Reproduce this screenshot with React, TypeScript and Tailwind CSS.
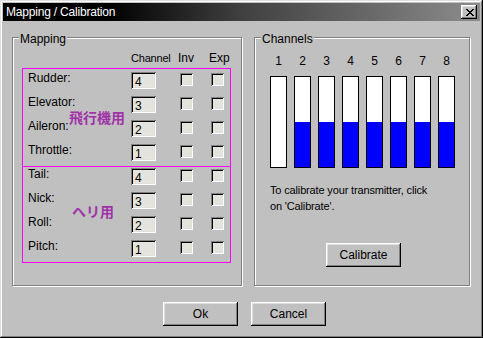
import type { ReactNode } from "react";

const raised = "shadow-[inset_-1px_-1px_0_#000,inset_1px_1px_0_#fff,inset_-2px_-2px_0_#808080,inset_2px_2px_0_#dfdfdf]";
const sunken = "shadow-[inset_1px_1px_0_#808080,inset_-1px_-1px_0_#fff,inset_2px_2px_0_#000,inset_-2px_-2px_0_#dfdfdf]";
const etched = "border border-[#808080] shadow-[inset_1px_1px_0_#fff,1px_1px_0_#fff]";

const planeRows = [
    { label: "Rudder:", ch: "4" },
    { label: "Elevator:", ch: "3" },
    { label: "Aileron:", ch: "2" },
    { label: "Throttle:", ch: "1" },
];
const heliRows = [
    { label: "Tail:", ch: "4" },
    { label: "Nick:", ch: "3" },
    { label: "Roll:", ch: "2" },
    { label: "Pitch:", ch: "1" },
];
const channels = [0, 45, 45, 45, 45, 45, 45, 45];

function Button({ children, className = "" }: { children: ReactNode, className?: string }) {
    return (
        <div className={`w-[75px] h-[24px] flex items-center justify-center bg-[#c0c0c0] ${raised} ${className}`}>
            {children}
        </div>
    );
}

function Check() {
    return <div className={`w-[13px] h-[13px] bg-[#e4e4dc] ${sunken}`} />;
}

function Row({ label, ch }: { label: string, ch: string }) {
    return (
        <div className="flex items-start h-[24px]">
            <div className="w-[108px] pl-[5px] mt-[2px]">{label}</div>
            <div className={`w-[25px] h-[17px] mt-[3px] pl-[4px] pt-[4px] leading-[13px] overflow-hidden bg-[#e4e4dc] ${sunken}`}>{ch}</div>
            <div className="ml-[24px] mt-[4px]"><Check /></div>
            <div className="ml-[18px] mt-[4px]"><Check /></div>
        </div>
    );
}

function CloseGlyph() {
    const cells = [
        [0, 0, 2], [6, 0, 2],
        [1, 1, 2], [5, 1, 2],
        [2, 2, 4],
        [3, 3, 2],
        [2, 4, 4],
        [1, 5, 2], [5, 5, 2],
        [0, 6, 2], [6, 6, 2],
    ];
    return (
        <svg width="8" height="7" viewBox="0 0 8 7" shapeRendering="crispEdges">
            {cells.map(([x, y, w], i) => <rect key={i} x={x} y={y} width={w} height={1} fill="#000" />)}
        </svg>
    );
}

export default function App() {
    return (
        <div className="w-[483px] h-[338px] p-[3px] flex flex-col bg-[#c0c0c0] text-black text-[12px] leading-[14px] font-['Liberation_Sans',Arial,sans-serif] shadow-[inset_-1px_-1px_0_#000,inset_1px_1px_0_#dfdfdf,inset_-2px_-2px_0_#808080,inset_2px_2px_0_#fff]">
            <div className="h-[18px] flex items-center pl-[3px] pr-[3px] bg-[linear-gradient(to_right,#000_0%,#000_22%,#404040_50%,#8c8c8c_100%)]">
                <span className="flex-1 text-white tracking-[-0.2px]">Mapping / Calibration</span>
                <div className={`w-[16px] h-[14px] flex items-center justify-center pl-[1px] bg-[#c0c0c0] ${raised}`}>
                    <CloseGlyph />
                </div>
            </div>

            <div className="flex pt-[16px] pl-[9px]">
                <div className={`relative w-[230px] h-[249px] pt-[13px] ${etched}`}>
                    <span className="absolute -top-[6px] left-[6px] px-[1px] bg-[#c0c0c0]">Mapping</span>
                    <div className="flex pl-[118px] h-[14px]">
                        <span className="w-[47px] text-[11px] tracking-[-0.2px]">Channel</span>
                        <span className="w-[31px]">Inv</span>
                        <span>Exp</span>
                    </div>
                    <div className="relative ml-[9px] mt-[3px] w-[209px] h-[99px] border border-[#ff00ff]">
                        {planeRows.map(r => <Row key={r.label} {...r} />)}
                        <span className="absolute top-[41px] left-[46px] text-[14px] leading-[14px] font-bold text-[#a033a8] font-['Noto_Sans_CJK_JP',sans-serif]">飛行機用</span>
                    </div>
                    <div className="relative ml-[9px] w-[209px] h-[98px] border-x border-b border-[#ff00ff]">
                        <div className="-mt-[2px]">
                            {heliRows.map(r => <Row key={r.label} {...r} />)}
                        </div>
                        <span className="absolute top-[39px] left-[49px] text-[14px] leading-[14px] font-bold text-[#a033a8] font-['Noto_Sans_CJK_JP',sans-serif]">ヘリ用</span>
                    </div>
                </div>

                <div className={`relative ml-[12px] w-[216px] h-[249px] pt-[16px] pl-[15px] ${etched}`}>
                    <span className="absolute -top-[6px] left-[6px] px-[1px] bg-[#c0c0c0]">Channels</span>
                    <div className="flex gap-[7px]">
                        {channels.map((_, i) => <span key={i} className="w-[17px] text-center">{i + 1}</span>)}
                    </div>
                    <div className="flex gap-[7px] mt-[8px]">
                        {channels.map((v, i) => (
                            <div key={i} className="w-[17px] h-[92px] flex flex-col justify-end border border-black bg-white">
                                <div className="bg-[#0000ff]" style={{ height: v }} />
                            </div>
                        ))}
                    </div>
                    <p className="mt-[14px] leading-[16px] text-[11px] tracking-[-0.15px]">To calibrate your transmitter, click<br />on 'Calibrate'.</p>
                    <Button className="mt-[29px] ml-[56px]">Calibrate</Button>
                </div>
            </div>

            <div className="flex pl-[160px] mt-[16px] gap-[13px]">
                <Button>Ok</Button>
                <Button>Cancel</Button>
            </div>
        </div>
    );
}
